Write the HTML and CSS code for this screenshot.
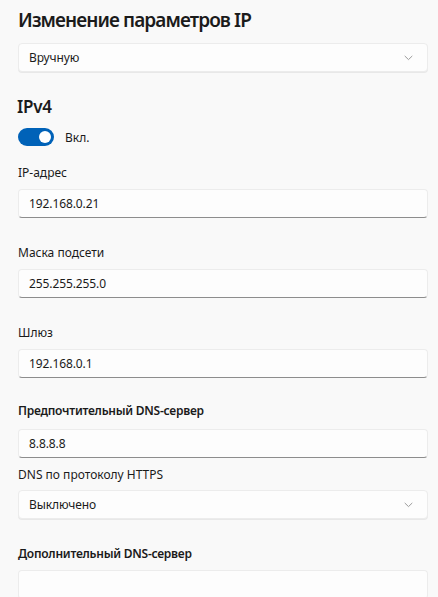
FILE: index.html
```html
<!DOCTYPE html>
<html lang="ru">
<head>
<meta charset="utf-8">
<title>Изменение параметров IP</title>
<link rel="stylesheet" href="styles.css">
</head>
<body>
<main class="page">
  <h1 class="title">Изменение параметров IP</h1>
  <div class="control select">
    <span class="value">Вручную</span>
    <svg class="chevron" width="9" height="6" viewBox="0 0 9 6"><path d="M1 1.2 L4.5 4.6 L8 1.2" fill="none" stroke="#9a9a9a" stroke-width="1" stroke-linecap="round" stroke-linejoin="round"/></svg>
  </div>

  <h2 class="section">IPv4</h2>
  <div class="toggle-row">
    <span class="toggle"><span class="knob"></span></span>
    <span class="toggle-label">Вкл.</span>
  </div>

  <div class="field first">
    <div class="label">IP-адрес</div>
    <div class="control input"><span class="value">192.168.0.21</span></div>
  </div>
  <div class="field">
    <div class="label">Маска подсети</div>
    <div class="control input"><span class="value">255.255.255.0</span></div>
  </div>
  <div class="field">
    <div class="label">Шлюз</div>
    <div class="control input"><span class="value">192.168.0.1</span></div>
  </div>
  <div class="field dns">
    <div class="label strong">Предпочтительный DNS-сервер</div>
    <div class="control input"><span class="value">8.8.8.8</span></div>
  </div>
  <div class="field tight">
    <div class="label">DNS по протоколу HTTPS</div>
    <div class="control select">
      <span class="value">Выключено</span>
      <svg class="chevron" width="9" height="6" viewBox="0 0 9 6"><path d="M1 1.2 L4.5 4.6 L8 1.2" fill="none" stroke="#9a9a9a" stroke-width="1" stroke-linecap="round" stroke-linejoin="round"/></svg>
    </div>
  </div>
  <div class="field">
    <div class="label strong">Дополнительный DNS-сервер</div>
    <div class="control input faint"><span class="value"></span></div>
  </div>
</main>
</body>
</html>
```

FILE: styles.css
```css
html, body {
  margin: 0;
  padding: 0;
  background: #f9f9f9;
}
body {
  font-family: "Noto Sans", "Open Sans", sans-serif;
  color: #1b1b1b;
  overflow: hidden;
  height: 597px;
}
.page {
  padding: 6px 10px 0 18px;
}
.title {
  margin: 0;
  font-size: 19px;
  line-height: 28px;
  font-weight: 600;
  letter-spacing: -0.9px;
}
.control {
  box-sizing: border-box;
  height: 29px;
  background: #fdfdfd;
  border: 1px solid #ececec;
  border-radius: 4px;
  display: flex;
  align-items: center;
  padding: 0 14px 0 10px;
}
.title + .control {
  margin-top: 9px;
}
.select {
  justify-content: space-between;
  box-shadow: 0 1px 0 #e8e8e8;
}
.input {
  border-bottom: 1px solid #8d8d8d;
}
.input.faint {
  border-bottom-color: #efefef;
}
.value {
  font-size: 12px;
  line-height: 16px;
  letter-spacing: -0.1px;
}
.chevron {
  display: block;
}
.section {
  margin: 23px 0 0 -1px;
  font-size: 17px;
  line-height: 24px;
  font-weight: 600;
  letter-spacing: -0.3px;
}
.toggle-row {
  margin-top: 8px;
  height: 20px;
  display: flex;
  align-items: center;
  gap: 11px;
}
.toggle {
  width: 36px;
  height: 18px;
  border-radius: 9px;
  background: #0062b8;
  display: flex;
  align-items: center;
  justify-content: flex-end;
  padding-right: 3px;
  box-sizing: border-box;
}
.knob {
  width: 12px;
  height: 12px;
  border-radius: 50%;
  background: #ffffff;
}
.toggle-label {
  font-size: 12px;
  color: #1b1b1b;
}
.field {
  margin-top: 26px;
}
.field.first {
  margin-top: 17px;
}
.field.dns {
  margin-top: 24px;
}
.field.dns .label {
  margin-bottom: 9px;
}
.field.tight {
  margin-top: 8px;
}
.field.tight .label {
  margin-bottom: 6px;
}
.label {
  font-size: 12px;
  line-height: 18px;
  margin-bottom: 7px;
}
.label.strong {
  font-weight: 600;
  letter-spacing: -0.25px;
}
```
